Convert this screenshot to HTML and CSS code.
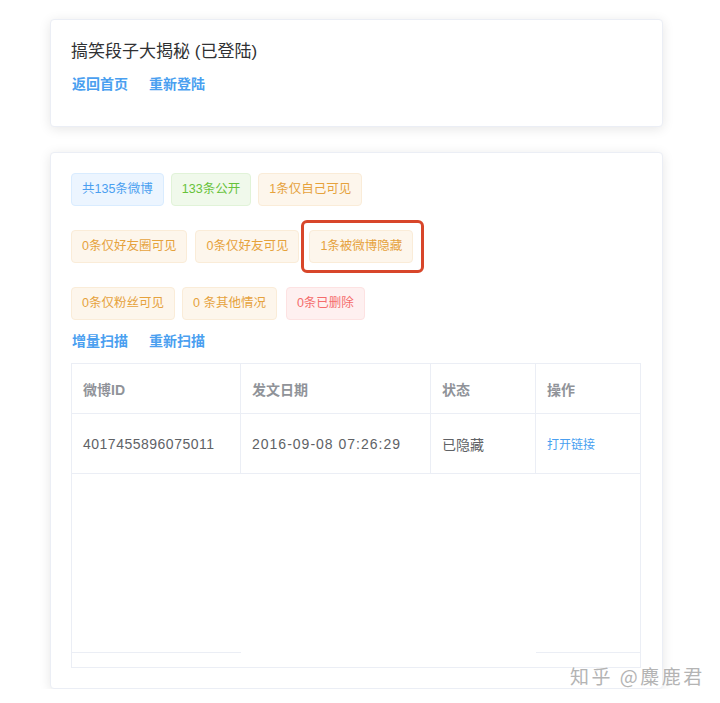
FILE: index.html
```html
<!DOCTYPE html>
<html>

<head>
    <title>搞笑段子大揭秘</title>
    <meta charset="utf-8">
    <meta name="viewport" content="width=device-width, initial-scale=1.0">
    <link rel="stylesheet" href="styles.css">
</head>

<body>

    <div class="card kort-top">
        <h1>搞笑段子大揭秘 (已登陆)</h1>
        <div class="links">
            <a href="#">返回首页</a>
            <a href="#">重新登陆</a>
        </div>
    </div>

    <div class="card kort-main">
        <div class="tags">
            <span class="tag blaa">共135条微博</span>
            <span class="tag groen">133条公开</span>
            <span class="tag gul">1条仅自己可见</span>
        </div>
        <div class="tags">
            <span class="tag gul">0条仅好友圈可见</span>
            <span class="tag gul ml1">0条仅好友可见</span>
            <span class="marker"><span class="tag gul">1条被微博隐藏</span></span>
        </div>
        <div class="tags">
            <span class="tag gul">0条仅粉丝可见</span>
            <span class="tag gul">0 条其他情况</span>
            <span class="tag roed ml2">0条已删除</span>
        </div>
        <div class="links scan">
            <a href="#">增量扫描</a>
            <a href="#">重新扫描</a>
        </div>

        <table class="liste">
            <colgroup>
                <col style="width:169px">
                <col style="width:190px">
                <col style="width:105px">
                <col>
            </colgroup>
            <thead>
                <tr>
                    <th>微博ID</th>
                    <th>发文日期</th>
                    <th>状态</th>
                    <th>操作</th>
                </tr>
            </thead>
            <tbody>
                <tr class="raekke">
                    <td class="tal">4017455896075011</td>
                    <td class="dato">2016-09-08 07:26:29</td>
                    <td>已隐藏</td>
                    <td><a href="#" class="aabn">打开链接</a></td>
                </tr>
                <tr class="tom">
                    <td colspan="4"></td>
                </tr>
                <tr class="bund">
                    <td class="streg"></td>
                    <td></td>
                    <td></td>
                    <td class="streg"></td>
                </tr>
            </tbody>
        </table>
    </div>

    <div class="vandmaerke">知乎 @麋鹿君</div>

</body>

</html>
```

FILE: styles.css
```css
body {
    margin: 0;
    background-color: #ffffff;
    font-family: "Liberation Sans", "Noto Sans CJK SC", sans-serif;
    color: #606266;
}

.card {
    box-sizing: border-box;
    width: 613px;
    margin-left: 50px;
    border: 1px solid #ebeef5;
    border-radius: 4px;
    background-color: #ffffff;
    box-shadow: 0 2px 12px 0 rgba(0, 0, 0, 0.1);
    padding: 20px;
}

.kort-top {
    margin-top: 19px;
    height: 108px;
    padding-top: 21px;
}

.kort-main {
    margin-top: 25px;
    height: 537px;
}

h1 {
    margin: 0;
    font-size: 17px;
    line-height: 22px;
    font-weight: normal;
    color: #303133;
}

.links {
    display: flex;
    gap: 20px;
    margin-top: 11px;
    line-height: 20px;
}

.links a {
    font-size: 14px;
    font-weight: 600;
    color: #4a9ff0;
    text-decoration: none;
    padding-left: 1px;
}

.scan {
    margin-top: 11px;
}

.tags {
    display: flex;
    gap: 7px;
    margin-bottom: 24px;
    align-items: center;
}

.tags:nth-of-type(3) {
    margin-bottom: 0;
}

.tag {
    box-sizing: border-box;
    display: inline-block;
    height: 33px;
    line-height: 31px;
    padding: 0 10px;
    font-size: 12.5px;
    border: 1px solid;
    border-radius: 4px;
    white-space: nowrap;
}

.blaa {
    background-color: #ecf5ff;
    border-color: #d9ecff;
    color: #4a9ff0;
}

.groen {
    background-color: #f0f9eb;
    border-color: #e1f3d8;
    color: #67c23a;
}

.gul {
    background-color: #fdf6ec;
    border-color: #faecd8;
    color: #e6a23c;
}

.roed {
    background-color: #fef0f0;
    border-color: #fde2e2;
    color: #f56c6c;
}

.ml1 {
    margin-left: 1px;
}

.ml2 {
    margin-left: 2px;
}

.marker {
    position: relative;
    margin-left: 3px;
}

.marker::after {
    content: "";
    position: absolute;
    left: -8px;
    right: -11px;
    top: -10px;
    bottom: -10px;
    border: 3px solid #d8462a;
    border-radius: 6px;
}

.liste {
    margin-top: 12px;
    width: 570px;
    border-collapse: collapse;
    table-layout: fixed;
    border: 1px solid #ebeef5;
    font-size: 14px;
}

.liste th,
.liste .raekke td {
    text-align: left;
    padding: 0 11px;
    border-right: 1px solid #ebeef5;
    border-bottom: 1px solid #ebeef5;
}

.liste th {
    height: 49px;
    color: #909399;
    font-weight: 600;
}

.liste .raekke td {
    height: 59px;
    color: #606266;
}

.tal {
    letter-spacing: 0.5px;
}

.dato {
    letter-spacing: 1px;
}

.aabn {
    font-size: 12px;
    color: #4a9ff0;
    text-decoration: none;
}

.tom td {
    height: 178px;
    padding: 0;
}

.bund td {
    height: 14px;
    padding: 0;
}

.bund .streg {
    border-top: 1px solid #ebeef5;
}

.vandmaerke {
    position: absolute;
    left: 570px;
    top: 662px;
    font-size: 19px;
    letter-spacing: 2.5px;
    color: #b4b4b4;
    text-shadow: 0 0 2px #ffffff, 0 0 2px #ffffff;
    font-family: "Noto Sans CJK SC", sans-serif;
}
```
